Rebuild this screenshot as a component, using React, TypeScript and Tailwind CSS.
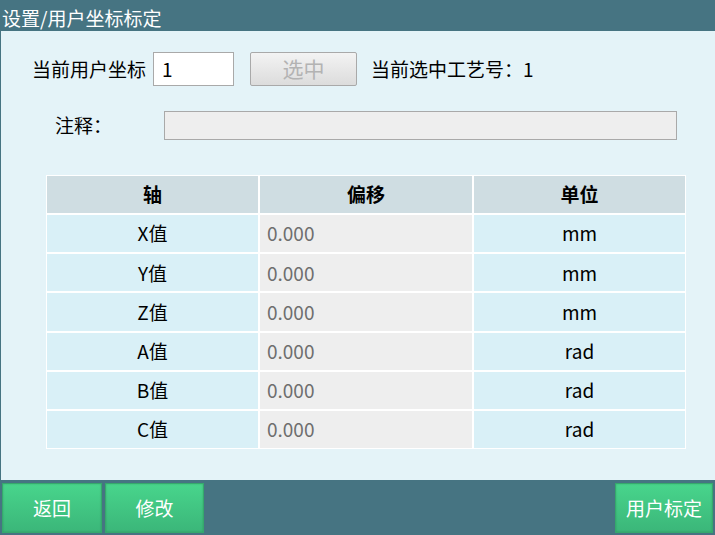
const rows = [
  { axis: 'X值', offset: '0.000', unit: 'mm' },
  { axis: 'Y值', offset: '0.000', unit: 'mm' },
  { axis: 'Z值', offset: '0.000', unit: 'mm' },
  { axis: 'A值', offset: '0.000', unit: 'rad' },
  { axis: 'B值', offset: '0.000', unit: 'rad' },
  { axis: 'C值', offset: '0.000', unit: 'rad' },
]

function GreenButton({ label, className = '' }: { label: string; className?: string }) {
  return (
    <button
      className={`h-[50px] flex items-center justify-center text-white text-[19px] border border-[#35a86c] bg-gradient-to-b from-[#48d58c] to-[#3bb679] shadow-[inset_0_0_2px_rgba(0,0,0,0.2)] ${className}`}
    >
      {label}
    </button>
  )
}

export default function App() {
  return (
    <div
      className="w-[715px] h-[535px] flex flex-col overflow-hidden"
      style={{ fontFamily: '"Microsoft YaHei", "Noto Sans CJK SC", sans-serif' }}
    >
      <div className="h-[31px] shrink-0 bg-[#467482] text-white text-[19px] leading-none flex items-end pb-[4px] pl-[2px]">
        设置/用户坐标标定
      </div>

      <div className="flex-1 bg-[#e4f3f8] border-l border-[#467482] flex flex-col">
        <div className="flex items-center mt-[21px] h-[34px] text-[19px] text-black">
          <span className="ml-[31px]">当前用户坐标</span>
          <div className="ml-[7px] w-[81px] h-[34px] bg-white border border-[#a9a9a9] flex items-center pl-[8px]">1</div>
          <button className="ml-[16px] w-[107px] h-[34px] rounded-[2px] border border-[#a9a9a9] bg-gradient-to-b from-[#f3f3f3] to-[#dcdcdc] text-[#b3b3b3] text-[21px]">
            选中
          </button>
          <span className="ml-[14px]">当前选中工艺号：1</span>
        </div>

        <div className="flex items-center mt-[25px] h-[29px] text-[19px] text-black">
          <span className="ml-[54px] w-[109px]">注释：</span>
          <div className="w-[513px] h-[29px] bg-[#eeeeee] border border-[#a9a9a9]" />
        </div>

        <div className="ml-[45px] mt-[35px] w-[640px] h-[274px] bg-white p-[1px] grid grid-cols-[211px_212px_211px] grid-rows-[repeat(7,1fr)] gap-[2px] text-[19px]">
          <div className="bg-[#cfdde2] flex items-center justify-center font-bold">轴</div>
          <div className="bg-[#cfdde2] flex items-center justify-center font-bold">偏移</div>
          <div className="bg-[#cfdde2] flex items-center justify-center font-bold">单位</div>
          {rows.map((r) => (
            <div key={r.axis} className="contents">
              <div className="bg-[#d9f0f7] flex items-center justify-center text-black">{r.axis}</div>
              <div className="bg-[#eeeeee] flex items-center pl-[7px] text-[#6e6e6e]">{r.offset}</div>
              <div className="bg-[#d9f0f7] flex items-center justify-center text-black">{r.unit}</div>
            </div>
          ))}
        </div>
      </div>

      <div className="h-[55px] shrink-0 bg-[#467482] flex items-center px-[2px] pt-[1px]">
        <GreenButton label="返回" className="w-[100px]" />
        <GreenButton label="修改" className="w-[99px] ml-[3px]" />
        <div className="flex-1" />
        <GreenButton label="用户标定" className="w-[98px]" />
      </div>
    </div>
  )
}
